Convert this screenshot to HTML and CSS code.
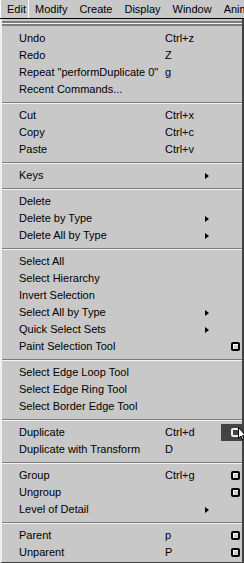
FILE: index.html
```html
<!DOCTYPE html>
<html>
<head>
<meta charset="utf-8">
<link rel="stylesheet" href="styles.css">
</head>
<body>
<div class="menubar">
  <span class="mb mb-active">Edit</span>
  <span class="mb">Modify</span>
  <span class="mb">Create</span>
  <span class="mb">Display</span>
  <span class="mb">Window</span>
  <span class="mb">Anim</span>
</div>
<div class="menu">
  <div class="tearoff"></div>

  <div class="row"><span class="lbl">Undo</span><span class="sc">Ctrl+z</span></div>
  <div class="row"><span class="lbl">Redo</span><span class="sc">Z</span></div>
  <div class="row"><span class="lbl">Repeat "performDuplicate 0"</span><span class="sc">g</span></div>
  <div class="row"><span class="lbl">Recent Commands...</span></div>
  <div class="sep"></div>
  <div class="row"><span class="lbl">Cut</span><span class="sc">Ctrl+x</span></div>
  <div class="row"><span class="lbl">Copy</span><span class="sc">Ctrl+c</span></div>
  <div class="row"><span class="lbl">Paste</span><span class="sc">Ctrl+v</span></div>
  <div class="sep"></div>
  <div class="row"><span class="lbl">Keys</span><span class="sc"></span><span class="arr"></span></div>
  <div class="sep"></div>
  <div class="row"><span class="lbl">Delete</span></div>
  <div class="row"><span class="lbl">Delete by Type</span><span class="sc"></span><span class="arr"></span></div>
  <div class="row"><span class="lbl">Delete All by Type</span><span class="sc"></span><span class="arr"></span></div>
  <div class="sep"></div>
  <div class="row"><span class="lbl">Select All</span></div>
  <div class="row"><span class="lbl">Select Hierarchy</span></div>
  <div class="row"><span class="lbl">Invert Selection</span></div>
  <div class="row"><span class="lbl">Select All by Type</span><span class="sc"></span><span class="arr"></span></div>
  <div class="row"><span class="lbl">Quick Select Sets</span><span class="sc"></span><span class="arr"></span></div>
  <div class="row"><span class="lbl">Paint Selection Tool</span><span class="sc"></span><span class="noarr"></span><span class="opt"><span class="box"></span></span></div>
  <div class="sep"></div>
  <div class="row"><span class="lbl">Select Edge Loop Tool</span></div>
  <div class="row"><span class="lbl">Select Edge Ring Tool</span></div>
  <div class="row"><span class="lbl">Select Border Edge Tool</span></div>
  <div class="sep"></div>
  <div class="row"><span class="lbl">Duplicate</span><span class="sc">Ctrl+d</span><span class="noarr"></span><span class="opt opt-hot"><span class="box"></span><span class="cursor"><svg width="8" height="14" viewBox="0 0 8 14"><path d="M0.5 0.5 L0.5 11.5 L3 9 L4.8 13 L6.3 12.3 L4.6 8.5 L7.5 8.5 Z" fill="#fff" stroke="#000" stroke-width="1"/></svg></span></span></div>
  <div class="row"><span class="lbl">Duplicate with Transform</span><span class="sc">D</span></div>
  <div class="sep"></div>
  <div class="row"><span class="lbl">Group</span><span class="sc">Ctrl+g</span><span class="noarr"></span><span class="opt"><span class="box"></span></span></div>
  <div class="row"><span class="lbl">Ungroup</span><span class="sc"></span><span class="noarr"></span><span class="opt"><span class="box"></span></span></div>
  <div class="row"><span class="lbl">Level of Detail</span><span class="sc"></span><span class="arr"></span></div>
  <div class="sep"></div>
  <div class="row"><span class="lbl">Parent</span><span class="sc">p</span><span class="noarr"></span><span class="opt"><span class="box"></span></span></div>
  <div class="row"><span class="lbl">Unparent</span><span class="sc">P</span><span class="noarr"></span><span class="opt"><span class="box"></span></span></div>
</div>
</body>
</html>
```

FILE: styles.css
```css
html, body {
  margin: 0;
  padding: 0;
  background: #c8c8c8;
}
body {
  width: 244px;
  height: 563px;
  overflow: hidden;
  font-family: "Liberation Sans", Arial, sans-serif;
  font-size: 11px;
  color: #000;
}
.menubar {
  height: 19px;
  display: flex;
  align-items: center;
  background: #c8c8c8;
  border-bottom: 1px solid #000;
  box-sizing: border-box;
  white-space: nowrap;
  overflow: hidden;
}
.mb {
  flex-shrink: 0;
  padding: 0 6px 0 6px;
  line-height: 19px;
  font-size: 11px;
}
.mb-active {
  width: 29px;
  box-sizing: border-box;
  padding: 0 0 0 6px;
  border-left: 1px solid #fff;
  border-right: 1px solid #fff;
  margin-right: 0;
}
.menu {
  height: 544px;
  box-sizing: border-box;
  border-left: 2px solid #f0f0f0;
  border-right: 2px solid #404040;
  border-bottom: 1px solid #404040;
  padding-top: 11px;
  position: relative;
  display: flex;
  flex-direction: column;
}
.tearoff {
  position: absolute;
  left: 0;
  right: 0;
  top: 2px;
  height: 5px;
  border-top: 2px solid #7c7c7c;
  border-bottom: 2px solid #7c7c7c;
  box-sizing: border-box;
  background: #f4f4f4;
}
.row {
  height: 17px;
  display: grid;
  grid-template-columns: 146px 38px 22px 1fr;
  align-items: center;
  padding-left: 17px;
  white-space: nowrap;
  line-height: 17px;
}
.sep {
  height: 9px;
  position: relative;
}
.sep::after {
  content: "";
  position: absolute;
  left: 0;
  right: 0;
  top: 4px;
  height: 1px;
  background: #7c7c7c;
  border-bottom: 1px solid #f4f4f4;
}
.arr {
  width: 0;
  height: 0;
  border-left: 4px solid #000;
  border-top: 3.5px solid transparent;
  border-bottom: 3.5px solid transparent;
  margin-left: 2px;
}
.opt {
  display: flex;
  align-items: center;
  justify-content: flex-start;
  height: 17px;
  padding-left: 6px;
  position: relative;
}
.box {
  width: 9px;
  height: 9px;
  box-sizing: border-box;
  border: 2px solid #000;
  border-radius: 2px;
  background: #cfcfcf;
  box-shadow: inset 1px 1px 0 #fff;
}
.opt-hot {
  background: #444;
  margin-left: -4px;
  padding-left: 10px;
}
.opt-hot .box {
  border-color: #f0f0f0;
  background: #444;
  box-shadow: none;
}
.cursor {
  position: absolute;
  left: 17px;
  top: 3px;
  width: 8px;
  height: 14px;
}
.cursor svg {
  display: block;
}
```
